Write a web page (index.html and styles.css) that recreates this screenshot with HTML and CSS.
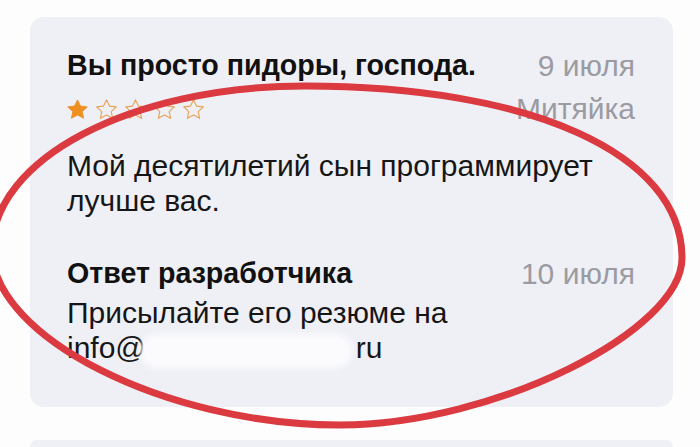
FILE: index.html
```html
<!DOCTYPE html>
<html lang="ru">
<head>
<meta charset="utf-8">
<title>Отзыв</title>
<link rel="stylesheet" href="styles.css">
</head>
<body>
<div class="page">
  <article class="card review">
    <div class="row head">
      <h2 class="title">Вы просто пидоры, господа.</h2>
      <span class="meta">9 июля</span>
    </div>
    <div class="row sub">
      <div class="stars" aria-label="1 из 5">
        <svg class="star" viewBox="0 0 24 24"><path class="filled" d="M12 1l3.4 7.1 7.8.9-5.8 5.4 1.6 7.7L12 18.2l-7 3.9 1.6-7.7L.8 9l7.8-.9z"/></svg>
        <svg class="star" viewBox="0 0 24 24"><path class="empty" d="M12 1l3.4 7.1 7.8.9-5.8 5.4 1.6 7.7L12 18.2l-7 3.9 1.6-7.7L.8 9l7.8-.9z"/></svg>
        <svg class="star" viewBox="0 0 24 24"><path class="empty" d="M12 1l3.4 7.1 7.8.9-5.8 5.4 1.6 7.7L12 18.2l-7 3.9 1.6-7.7L.8 9l7.8-.9z"/></svg>
        <svg class="star" viewBox="0 0 24 24"><path class="empty" d="M12 1l3.4 7.1 7.8.9-5.8 5.4 1.6 7.7L12 18.2l-7 3.9 1.6-7.7L.8 9l7.8-.9z"/></svg>
        <svg class="star" viewBox="0 0 24 24"><path class="empty" d="M12 1l3.4 7.1 7.8.9-5.8 5.4 1.6 7.7L12 18.2l-7 3.9 1.6-7.7L.8 9l7.8-.9z"/></svg>
      </div>
      <span class="meta">Митяйка</span>
    </div>
    <p class="text review-text">Мой десятилетий сын программирует лучше вас.</p>
    <div class="row head reply-head">
      <h3 class="title">Ответ разработчика</h3>
      <span class="meta">10 июля</span>
    </div>
    <p class="text reply-text">Присылайте его резюме на <span class="email">info@<span class="redact"></span>ru</span></p>
  </article>
  <div class="card next"></div>
  <svg class="circle" viewBox="0 0 700 447" aria-hidden="true">
    <path d="M305 86 C529 86 682 153 682 258 C682 331 494 425 340 425 C166 425 -8 337 -8 250 C-8 159 131 86 305 86 Z"/>
  </svg>
</div>
</body>
</html>
```

FILE: styles.css
```css
* { box-sizing: border-box; }

html, body {
  margin: 0;
  padding: 0;
  background: #fdfdfd;
}

body {
  font-family: "Liberation Sans", Arial, sans-serif;
  color: #141414;
  width: 700px;
  height: 447px;
  overflow: hidden;
}

.page {
  position: relative;
  width: 700px;
  height: 447px;
  padding: 17px 27px 0 30px;
  display: flex;
  flex-direction: column;
  gap: 33px;
  overflow: hidden;
}

.card {
  background: #eff0f6;
  border-radius: 14px;
  flex: none;
}

.review {
  height: 390px;
  padding: 31px 38px 0 37px;
  display: flex;
  flex-direction: column;
}

.next {
  height: 7px;
  border-radius: 14px 14px 0 0;
}

.row {
  display: flex;
  justify-content: space-between;
  align-items: center;
  height: 35px;
}

.title {
  margin: 0;
  font-size: 28.6px;
  line-height: 35px;
  font-weight: 700;
  color: #111;
}

.meta {
  font-size: 30px;
  line-height: 35px;
  color: #9b9ba1;
}

.sub {
  margin-top: 8px;
}

.stars {
  display: flex;
  gap: 8px;
  align-items: center;
  padding-top: 2px;
}

.star {
  width: 21px;
  height: 21px;
  display: block;
}

.star .filled {
  fill: #ee8f22;
  stroke: #ee8f22;
  stroke-width: 1;
  stroke-linejoin: round;
}

.star .empty {
  fill: none;
  stroke: #e7a155;
  stroke-width: 1.3;
  stroke-linejoin: round;
}

.text {
  margin: 0;
  font-size: 30px;
  line-height: 35px;
  color: #161616;
}

.review-text {
  margin-top: 22px;
}

.reply-head {
  margin-top: 38px;
}

.reply-text {
  margin-top: 4px;
}

.email {
  white-space: nowrap;
}

.redact {
  display: inline-block;
  width: 212px;
  height: 34px;
  margin: 0 4px 0 -6px;
  vertical-align: -10px;
  background: #fbfbfd;
  border-radius: 17px;
  filter: blur(3px);
}

.circle {
  position: absolute;
  left: 0;
  top: 0;
  width: 700px;
  height: 447px;
  overflow: visible;
  pointer-events: none;
}

.circle path {
  fill: none;
  stroke: #db3a40;
  stroke-width: 7;
}
```
